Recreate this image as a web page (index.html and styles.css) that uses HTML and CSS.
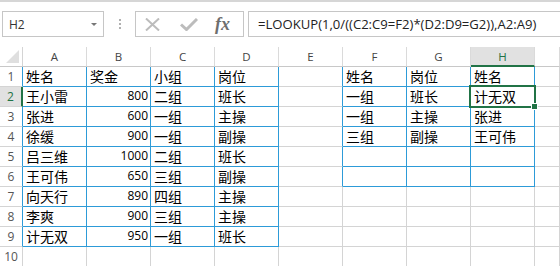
FILE: index.html
```html
<!DOCTYPE html>
<html lang="zh-CN">
<head>
<meta charset="utf-8">
<title>Sheet</title>
<link rel="stylesheet" href="styles.css">
</head>
<body>
<div class="topline"></div>
<div class="fbar">
  <div class="namebox"><span class="nb-text">H2</span><span class="nb-arrow"></span></div>
  <div class="dots"><span></span><span></span><span></span></div>
  <div class="fxbox">
    <svg class="ico-x" width="15" height="13" viewBox="0 0 15 13"><path d="M1 0.5 L14 12.5 M14 0.5 L1 12.5" stroke="#bcbcbc" stroke-width="2" fill="none"/></svg>
    <svg class="ico-ok" width="18" height="13" viewBox="0 0 18 13"><path d="M1 6.5 L6.5 11.5 L17 1" stroke="#bcbcbc" stroke-width="3" fill="none"/></svg>
    <span class="fx">fx</span>
  </div>
  <div class="formula">=LOOKUP(1,0/((C2:C9=F2)*(D2:D9=G2)),A2:A9)</div>
</div>
<div class="sheet">
  <div class="c corner"><span class="tri"></span></div>
  <div class="c ch">A</div><div class="c ch">B</div><div class="c ch">C</div><div class="c ch">D</div>
  <div class="c ch">E</div><div class="c ch">F</div><div class="c ch">G</div><div class="c ch sel">H</div><div class="c ch"></div>

  <div class="c rh bl">1</div>
  <div class="c b">姓名</div><div class="c b">奖金</div><div class="c b">小组</div><div class="c b">岗位</div>
  <div class="c bl"></div><div class="c b">姓名</div><div class="c b">岗位</div><div class="c b">姓名</div><div class="c"></div>

  <div class="c rh rsel">2</div>
  <div class="c b">王小雷</div><div class="c b n">800</div><div class="c b">二组</div><div class="c b">班长</div>
  <div class="c bl"></div><div class="c b">一组</div><div class="c b">班长</div><div class="c b">计无双</div><div class="c"></div>

  <div class="c rh bl">3</div>
  <div class="c b">张进</div><div class="c b n">600</div><div class="c b">一组</div><div class="c b">主操</div>
  <div class="c bl"></div><div class="c b">一组</div><div class="c b">主操</div><div class="c b">张进</div><div class="c"></div>

  <div class="c rh bl">4</div>
  <div class="c b">徐缓</div><div class="c b n">900</div><div class="c b">一组</div><div class="c b">副操</div>
  <div class="c bl"></div><div class="c b">三组</div><div class="c b">副操</div><div class="c b">王可伟</div><div class="c"></div>

  <div class="c rh bl">5</div>
  <div class="c b">吕三维</div><div class="c b n">1000</div><div class="c b">二组</div><div class="c b">班长</div>
  <div class="c bl"></div><div class="c b"></div><div class="c b"></div><div class="c b"></div><div class="c"></div>

  <div class="c rh bl">6</div>
  <div class="c b">王可伟</div><div class="c b n">650</div><div class="c b">三组</div><div class="c b">副操</div>
  <div class="c bl"></div><div class="c b"></div><div class="c b"></div><div class="c b"></div><div class="c"></div>

  <div class="c rh bl">7</div>
  <div class="c b">向天行</div><div class="c b n">890</div><div class="c b">四组</div><div class="c b">主操</div>
  <div class="c"></div><div class="c"></div><div class="c"></div><div class="c"></div><div class="c"></div>

  <div class="c rh bl">8</div>
  <div class="c b">李爽</div><div class="c b n">900</div><div class="c b">三组</div><div class="c b">主操</div>
  <div class="c"></div><div class="c"></div><div class="c"></div><div class="c"></div><div class="c"></div>

  <div class="c rh bl">9</div>
  <div class="c b">计无双</div><div class="c b n">950</div><div class="c b">一组</div><div class="c b">班长</div>
  <div class="c"></div><div class="c"></div><div class="c"></div><div class="c"></div><div class="c"></div>

  <div class="c rh">10</div>
  <div class="c"></div><div class="c"></div><div class="c"></div><div class="c"></div>
  <div class="c"></div><div class="c"></div><div class="c"></div><div class="c"></div><div class="c"></div>

  <div class="cursor"><span class="handle"></span></div>
</div>
</body>
</html>
```
FILE: styles.css
```css
html, body {
  margin: 0;
  padding: 0;
  background: #ffffff;
  overflow: hidden;
}
body {
  width: 560px;
  height: 266px;
  font-family: "Noto Sans CJK SC", "Open Sans", sans-serif;
  color: #000;
}
.topline {
  height: 2px;
  background: #d6d6d6;
}
.fbar {
  display: flex;
  height: 26px;
  margin-top: 9px;
  padding-left: 2px;
}
.namebox {
  box-sizing: border-box;
  width: 102px;
  border: 1px solid #c6c6c6;
  display: flex;
  align-items: center;
  justify-content: space-between;
  padding: 0 6px 0 6px;
  font-family: "Open Sans", sans-serif;
  font-size: 12px;
  color: #333;
}
.nb-arrow {
  width: 0;
  height: 0;
  border-left: 3px solid transparent;
  border-right: 3px solid transparent;
  border-top: 3px solid #777;
}
.dots {
  width: 31px;
  display: flex;
  flex-direction: column;
  align-items: center;
  justify-content: center;
  gap: 2px;
}
.dots span {
  width: 2px;
  height: 2px;
  background: #b0b0b0;
}
.fxbox {
  box-sizing: border-box;
  width: 109px;
  border: 1px solid #c6c6c6;
  display: flex;
  align-items: center;
  padding-left: 9px;
}
.ico-ok {
  margin-left: 20px;
}
.fx {
  margin-left: 17px;
  font-family: "Liberation Serif", serif;
  font-style: italic;
  font-weight: bold;
  font-size: 18px;
  color: #6e6e6e;
  line-height: 1;
}
.formula {
  flex: 1;
  margin-left: 4px;
  border: 1px solid #c6c6c6;
  border-right: none;
  display: flex;
  align-items: center;
  padding-left: 9px;
  font-family: "Open Sans", sans-serif;
  font-size: 13.1px;
  color: #222;
  white-space: nowrap;
  overflow: hidden;
}
.sheet {
  position: relative;
  margin-top: 10px;
  display: grid;
  grid-template-columns: 23px repeat(8, 64px) 1fr;
  grid-template-rows: repeat(11, 20px);
}
.c {
  box-sizing: border-box;
  border-right: 1px solid #d4d4d4;
  border-bottom: 1px solid #d4d4d4;
  display: flex;
  align-items: flex-end;
  padding: 0 2px 1px 3px;
  font-size: 14px;
  line-height: 17px;
  white-space: nowrap;
  overflow: hidden;
}
.c.b {
  border-right-color: #2d9bd8;
  border-bottom-color: #2d9bd8;
}
.c.bl {
  border-right-color: #2d9bd8;
}
.c.n {
  justify-content: flex-end;
  font-family: "Open Sans", sans-serif;
  font-size: 12px;
  padding-bottom: 2px;
}
.ch {
  justify-content: center;
  align-items: center;
  padding: 0;
  font-family: "Open Sans", sans-serif;
  font-size: 11.5px;
  color: #444;
  border-right-color: #dadada;
  border-bottom-color: #c8c8c8;
}
.ch.sel {
  background: #e1e1e1;
  border-bottom: 2px solid #217346;
  color: #217346;
}
.corner {
  position: relative;
  border-bottom-color: #c8c8c8;
}
.tri {
  position: absolute;
  right: 3px;
  bottom: 3px;
  width: 0;
  height: 0;
  border-left: 13px solid transparent;
  border-bottom: 13px solid #dfdfdf;
}
.rh {
  justify-content: center;
  align-items: center;
  padding: 0;
  font-family: "Open Sans", sans-serif;
  font-size: 12px;
  color: #555;
}
.rh.rsel {
  background: #e1e1e1;
  border-right: 2px solid #217346;
  color: #217346;
}
.cursor {
  position: absolute;
  left: 469px;
  top: 38px;
  width: 67px;
  height: 23px;
  box-sizing: border-box;
  border: 2px solid #217346;
  pointer-events: none;
}
.handle {
  position: absolute;
  right: -4px;
  bottom: -4px;
  width: 5px;
  height: 5px;
  background: #217346;
  border: 1px solid #fff;
}
```
